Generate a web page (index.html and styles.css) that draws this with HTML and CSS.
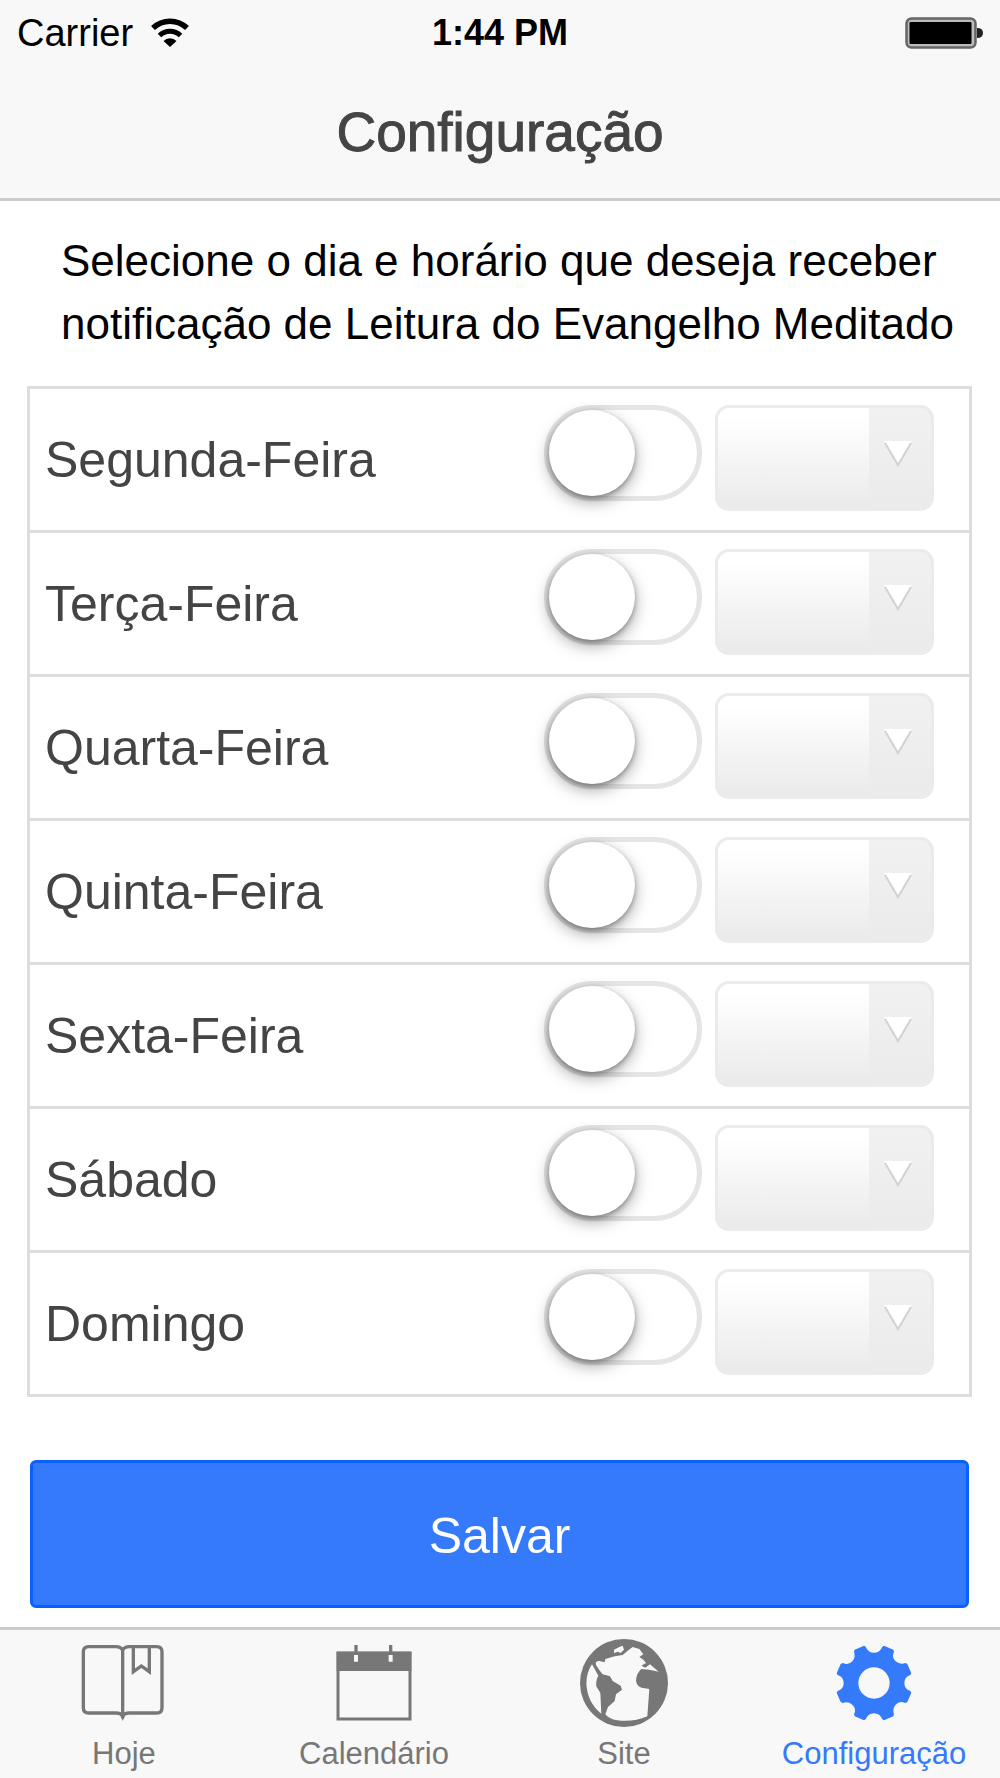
FILE: index.html
```html
<!DOCTYPE html>
<html lang="pt-BR">
<head>
<meta charset="utf-8">
<meta name="viewport" content="width=device-width, initial-scale=1">
<title>Configuração</title>
<link rel="stylesheet" href="styles.css">
</head>
<body>
<header class="header">
  <div class="status">
    <div class="carrier">
      <span>Carrier</span>
      <svg class="wifi" viewBox="0 0 38 30" aria-hidden="true">
        <path d="M2 10a24.500 24.500 0 0 1 34 0" fill="none" stroke="#000" stroke-width="5.500"/>
        <path d="M8.500 17.500a15 15 0 0 1 21 0" fill="none" stroke="#000" stroke-width="5"/>
        <path d="M19 29l-6.500-6a9 9 0 0 1 13 0z"/>
      </svg>
    </div>
    <span class="clock">1:44 PM</span>
    <svg class="battery" viewBox="0 0 78 32" aria-hidden="true">
      <rect x="1.500" y="1.500" width="69" height="29" rx="5" fill="#bbb" stroke="#666" stroke-width="2.500"/>
      <rect x="4.500" y="5" width="62" height="22" rx="1"/>
      <path d="M72 11q6 0 6 5t-6 5z" fill="#222"/>
    </svg>
  </div>
  <h1 class="title">Configuração</h1>
</header>

<main class="content">
  <p class="intro">Selecione o dia e horário que deseja receber notificação de Leitura do Evangelho Meditado</p>
  <form class="form">
    <ul class="days">
      <li class="day">
        <label class="day-name" for="segunda">Segunda-Feira</label>
        <input class="switch" type="checkbox" id="segunda">
        <div class="picker">
          <select class="hour" aria-label="Horário de segunda-feira"><option></option></select>
          <svg class="arrow" viewBox="0 0 28 26" aria-hidden="true"><path d="M0 0h28L14 24z" fill="#fff"/><path d="M1 2l13 22L27 2" fill="none" stroke="#d2d2d2" stroke-width="2"/></svg>
        </div>
      </li>
      <li class="day">
        <label class="day-name" for="terca">Terça-Feira</label>
        <input class="switch" type="checkbox" id="terca">
        <div class="picker">
          <select class="hour" aria-label="Horário de terça-feira"><option></option></select>
          <svg class="arrow" viewBox="0 0 28 26" aria-hidden="true"><path d="M0 0h28L14 24z" fill="#fff"/><path d="M1 2l13 22L27 2" fill="none" stroke="#d2d2d2" stroke-width="2"/></svg>
        </div>
      </li>
      <li class="day">
        <label class="day-name" for="quarta">Quarta-Feira</label>
        <input class="switch" type="checkbox" id="quarta">
        <div class="picker">
          <select class="hour" aria-label="Horário de quarta-feira"><option></option></select>
          <svg class="arrow" viewBox="0 0 28 26" aria-hidden="true"><path d="M0 0h28L14 24z" fill="#fff"/><path d="M1 2l13 22L27 2" fill="none" stroke="#d2d2d2" stroke-width="2"/></svg>
        </div>
      </li>
      <li class="day">
        <label class="day-name" for="quinta">Quinta-Feira</label>
        <input class="switch" type="checkbox" id="quinta">
        <div class="picker">
          <select class="hour" aria-label="Horário de quinta-feira"><option></option></select>
          <svg class="arrow" viewBox="0 0 28 26" aria-hidden="true"><path d="M0 0h28L14 24z" fill="#fff"/><path d="M1 2l13 22L27 2" fill="none" stroke="#d2d2d2" stroke-width="2"/></svg>
        </div>
      </li>
      <li class="day">
        <label class="day-name" for="sexta">Sexta-Feira</label>
        <input class="switch" type="checkbox" id="sexta">
        <div class="picker">
          <select class="hour" aria-label="Horário de sexta-feira"><option></option></select>
          <svg class="arrow" viewBox="0 0 28 26" aria-hidden="true"><path d="M0 0h28L14 24z" fill="#fff"/><path d="M1 2l13 22L27 2" fill="none" stroke="#d2d2d2" stroke-width="2"/></svg>
        </div>
      </li>
      <li class="day">
        <label class="day-name" for="sabado">Sábado</label>
        <input class="switch" type="checkbox" id="sabado">
        <div class="picker">
          <select class="hour" aria-label="Horário de sábado"><option></option></select>
          <svg class="arrow" viewBox="0 0 28 26" aria-hidden="true"><path d="M0 0h28L14 24z" fill="#fff"/><path d="M1 2l13 22L27 2" fill="none" stroke="#d2d2d2" stroke-width="2"/></svg>
        </div>
      </li>
      <li class="day">
        <label class="day-name" for="domingo">Domingo</label>
        <input class="switch" type="checkbox" id="domingo">
        <div class="picker">
          <select class="hour" aria-label="Horário de domingo"><option></option></select>
          <svg class="arrow" viewBox="0 0 28 26" aria-hidden="true"><path d="M0 0h28L14 24z" fill="#fff"/><path d="M1 2l13 22L27 2" fill="none" stroke="#d2d2d2" stroke-width="2"/></svg>
        </div>
      </li>
    </ul>
    <button class="save" type="button">Salvar</button>
  </form>
</main>

<nav class="tabs">
  <a class="tab" href="#hoje">
    <svg class="tab-icon" viewBox="0 0 264 264" aria-hidden="true">
      <g fill="none" stroke="currentColor" stroke-width="10">
        <path d="M128 34q-5-11-20-11H26Q10 23 10 39V206q0 16 16 16h82q15 0 20 9q5-9 20-9h82q16 0 16-16V39q0-16-16-16h-82q-15 0-20 11V238"/>
        <path d="M160 23V98l24-17 24 17V23"/>
      </g>
      <path d="M118 222h20l-10 24z" fill="currentColor"/>
    </svg>
    <span>Hoje</span>
  </a>
  <a class="tab" href="#calendario">
    <svg class="tab-icon" viewBox="0 0 264 264" aria-hidden="true">
      <path d="M24 42h216v198H24z" fill="none" stroke="currentColor" stroke-width="9"/>
      <path d="M20 38h224v58H20zM73 18h10v22h-10zM177 18h10v22h-10z" fill="currentColor"/>
      <path d="M72 48h12v20H72zM176 48h12v20h-12z" fill="#f8f8f8"/>
    </svg>
    <span>Calendário</span>
  </a>
  <a class="tab" href="#site">
    <svg class="tab-icon" viewBox="0 0 264 264" aria-hidden="true">
      <circle cx="132" cy="132" r="132" fill="currentColor"/>
      <path d="M36 76L55 110Q47 124 49 142L61 162L64 224Q22 190 19 134Q20 98 36 76z" fill="#f8f8f8"/>
      <path d="M48 78Q44 66 58 66L74 70L76 60L104 52L128 48L142 36L158 24L178 30L190 46L178 54L190 62L198 72L184 80L196 86L210 76L236 98L208 92L184 90Q168 104 168 126Q172 148 194 148L208 150L202 232Q160 250 112 244Q86 240 76 226L84 204L104 186L108 166L126 152L122 140L98 126L90 112L68 106L60 96z" fill="#f8f8f8"/>
      <path d="M102 32l16-8 10-4 4 12-10 10-8-4-12 4z" fill="#f8f8f8"/>
    </svg>
    <span>Site</span>
  </a>
  <a class="tab tab-active" href="#configuracao" aria-current="page">
    <svg class="tab-icon" viewBox="0 0 264 264" aria-hidden="true">
      <path fill="currentColor" fill-rule="evenodd" d="M74 32L102 20L107 23Q114 41 132 41T157 23L162 20L190 32L192 38Q184 56 197 67T226 72L232 75L244 103L241 108Q223 114 223 132T241 156L244 161L232 189L226 192Q208 184 197 197T192 226L190 232L162 244L157 241Q150 223 132 223T107 241L102 244L74 232L72 226Q80 208 67 197T38 192L32 189L20 161L23 156Q41 150 41 132T23 108L20 103L32 75L38 72Q56 80 67 67T72 38zM132 85a47 47 0 1 0 0 94a47 47 0 1 0 0-94z"/>
    </svg>
    <span>Configuração</span>
  </a>
</nav>
</body>
</html>
```
FILE: styles.css
```css
* {
  box-sizing: border-box;
}

body {
  display: flex;
  flex-direction: column;
  min-height: 100vh;
  margin: 0;
  background: #fff;
  color: #000;
  font-family: "Liberation Sans", Arial, sans-serif;
}

.header {
  border-bottom: 3px solid #ccc;
  background: #f8f8f8;
}

.status {
  display: grid;
  grid-template-columns: 1fr auto 1fr;
  align-items: center;
  height: 66px;
  padding: 0 17px;
}

.carrier {
  display: flex;
  align-items: center;
  gap: 18px;
  font-size: 38px;
}

.wifi {
  width: 38px;
  height: 30px;
}

.clock {
  font-size: 36px;
  font-weight: bold;
}

.battery {
  justify-self: end;
  width: 78px;
  height: 32px;
}

.title {
  margin: 0;
  color: #444;
  font-size: 55px;
  font-weight: normal;
  line-height: 132px;
  text-align: center;
  -webkit-text-stroke: 1px #444;
}

.content {
  flex: 1;
  padding: 28px 28px 18px 27px;
}

.intro {
  margin: 0 0 31px;
  padding-left: 34px;
  font-size: 44px;
  line-height: 63px;
}

.days {
  margin: 0;
  padding: 0;
  border: 3px solid #ddd;
  border-bottom: 0;
  list-style: none;
}

.day {
  display: flex;
  align-items: flex-start;
  gap: 13px;
  height: 144px;
  padding: 16px 35px 0 15px;
  border-bottom: 3px solid #ddd;
}

.day-name {
  flex: 1;
  color: #444;
  font-size: 50px;
  line-height: 110px;
}

.switch {
  flex: none;
  width: 158px;
  height: 96px;
  margin: 0;
  border: 5px solid #e5e5e5;
  border-radius: 48px;
  background: #fff;
  appearance: none;
}

.switch::before {
  display: block;
  width: 86px;
  height: 86px;
  border-radius: 50%;
  background: #fff;
  box-shadow: 0 6px 16px rgba(0, 0, 0, 0.35), 0 2px 5px rgba(0, 0, 0, 0.3);
  content: "";
}

.switch:checked {
  border-color: #347afa;
  background: #347afa;
}

.switch:checked::before {
  margin-left: auto;
}

.picker {
  display: grid;
  grid-template-columns: 1fr 72px;
  width: 219px;
  height: 106px;
}

.hour {
  grid-area: 1 / 1 / 2 / 3;
  width: 100%;
  height: 100%;
  margin: 0;
  padding: 0 66px 0 12px;
  border: 3px solid #ebebeb;
  border-radius: 14px;
  background:
    linear-gradient(#f1f1f1, #ebebeb) right / 62px 100% no-repeat,
    linear-gradient(#fff 10%, #eaeaea);
  font: inherit;
  font-size: 36px;
  appearance: none;
}

.arrow {
  grid-area: 1 / 2;
  align-self: center;
  justify-self: center;
  width: 28px;
  height: 26px;
  margin-bottom: 8px;
  pointer-events: none;
}

.save {
  display: block;
  width: calc(100% - 6px);
  height: 148px;
  margin: 63px 3px 0;
  padding: 4px 0 0;
  border: 3px solid #0a60ff;
  border-radius: 6px;
  background: #347afa;
  color: #fff;
  font-family: inherit;
  font-size: 50px;
}

.tabs {
  display: flex;
  border-top: 3px solid #ccc;
  background: #f8f8f8;
}

.tab {
  display: flex;
  flex: 1 1 0;
  flex-direction: column;
  align-items: center;
  gap: 9px;
  padding: 9px 2px 6px 0;
  color: #777;
  font-size: 31px;
  line-height: 36px;
  text-decoration: none;
}

.tab-icon {
  width: 88px;
  height: 88px;
}

.tab-active {
  color: #347afa;
}
```
